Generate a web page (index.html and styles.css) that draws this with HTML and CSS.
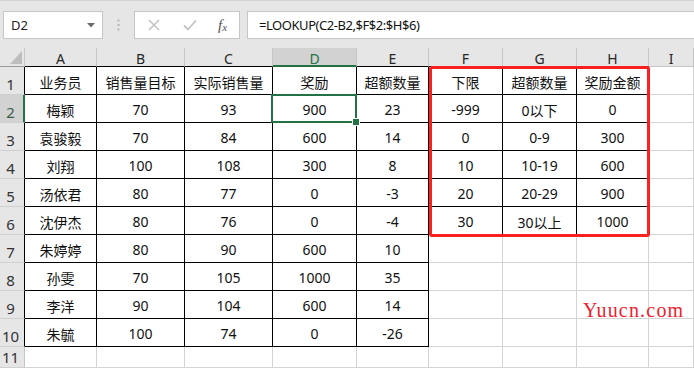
FILE: index.html
```html
<!DOCTYPE html>
<html>
<head>
<meta charset="utf-8">
<link rel="stylesheet" href="styles.css">
</head>
<body>
<div class="app">
  <div class="toolbar">
    <div class="namebox">
      <span>D2</span>
      <svg class="arrow" width="8" height="5" viewBox="0 0 8 5"><path d="M0 0H8L4 4.5Z" fill="#6b6b6b"/></svg>
    </div>
    <div class="dots">
      <svg width="3" height="12" viewBox="0 0 3 12"><rect x="0.5" y="0.5" width="2" height="2" fill="#b5b5b5"/><rect x="0.5" y="5" width="2" height="2" fill="#b5b5b5"/><rect x="0.5" y="9.5" width="2" height="2" fill="#b5b5b5"/></svg>
    </div>
    <div class="fxbtns">
      <svg class="btn" width="12" height="12" viewBox="0 0 12 12"><path d="M1 1L11 11M11 1L1 11" stroke="#c4c4c4" stroke-width="1.6"/></svg>
      <svg class="btn" width="14" height="12" viewBox="0 0 14 12"><path d="M1 6.5L5 10.5L13 1.5" stroke="#c4c4c4" stroke-width="1.8" fill="none"/></svg>
      <span class="fx">f<sub>x</sub></span>
    </div>
    <div class="formula">=LOOKUP(C2-B2,$F$2:$H$6)</div>
  </div>

  <div class="sheet">
    <div class="corner"><svg width="12" height="13" viewBox="0 0 12 13"><path d="M12 0V13H0Z" fill="#bdbdbd"/></svg></div>
    <div class="ch tb">A</div><div class="ch tb">B</div><div class="ch tb">C</div><div class="ch tb sel">D</div><div class="ch tb">E</div><div class="ch tb">F</div><div class="ch tb">G</div><div class="ch tb">H</div><div class="ch">I</div>

    <div class="rh">1</div><div class="c k">业务员</div><div class="c k">销售量目标</div><div class="c k">实际销售量</div><div class="c k">奖励</div><div class="c k">超额数量</div><div class="c k">下限</div><div class="c k">超额数量</div><div class="c k">奖励金额</div><div class="c"></div>
    <div class="rh rsel">2</div><div class="c k">梅颖</div><div class="c k">70</div><div class="c k">93</div><div class="c k active">900</div><div class="c k">23</div><div class="c k">-999</div><div class="c k">0以下</div><div class="c k">0</div><div class="c"></div>
    <div class="rh">3</div><div class="c k">袁骏毅</div><div class="c k">70</div><div class="c k">84</div><div class="c k">600</div><div class="c k">14</div><div class="c k">0</div><div class="c k">0-9</div><div class="c k">300</div><div class="c"></div>
    <div class="rh">4</div><div class="c k">刘翔</div><div class="c k">100</div><div class="c k">108</div><div class="c k">300</div><div class="c k">8</div><div class="c k">10</div><div class="c k">10-19</div><div class="c k">600</div><div class="c"></div>
    <div class="rh">5</div><div class="c k">汤依君</div><div class="c k">80</div><div class="c k">77</div><div class="c k">0</div><div class="c k">-3</div><div class="c k">20</div><div class="c k">20-29</div><div class="c k">900</div><div class="c"></div>
    <div class="rh">6</div><div class="c k">沈伊杰</div><div class="c k">80</div><div class="c k">76</div><div class="c k">0</div><div class="c k">-4</div><div class="c k">30</div><div class="c k">30以上</div><div class="c k">1000</div><div class="c"></div>
    <div class="rh">7</div><div class="c k">朱婷婷</div><div class="c k">80</div><div class="c k">90</div><div class="c k">600</div><div class="c k">10</div><div class="c"></div><div class="c"></div><div class="c"></div><div class="c"></div>
    <div class="rh">8</div><div class="c k">孙雯</div><div class="c k">70</div><div class="c k">105</div><div class="c k">1000</div><div class="c k">35</div><div class="c"></div><div class="c"></div><div class="c"></div><div class="c"></div>
    <div class="rh">9</div><div class="c k">李洋</div><div class="c k">90</div><div class="c k">104</div><div class="c k">600</div><div class="c k">14</div><div class="c"></div><div class="c"></div><div class="c"></div><div class="c"></div>
    <div class="rh">10</div><div class="c k">朱毓</div><div class="c k">100</div><div class="c k">74</div><div class="c k">0</div><div class="c k">-26</div><div class="c"></div><div class="c"></div><div class="c"></div><div class="c"></div>
    <div class="rh last">11</div><div class="c"></div><div class="c"></div><div class="c"></div><div class="c"></div><div class="c"></div><div class="c"></div><div class="c"></div><div class="c"></div><div class="c"></div>

    <div class="redbox"></div>
    <div class="wm">Yuucn.com</div>
  </div>
</div>
</body>
</html>
```

FILE: styles.css
```css
* { box-sizing: border-box; }
html, body { margin: 0; padding: 0; background: #fff; }
body { width: 694px; height: 368px; overflow: hidden; font-family: "Noto Sans", "Noto Sans CJK SC", sans-serif; }

.app { display: flex; flex-direction: column; }

.toolbar {
  height: 48px;
  background: #e6e6e6;
  border-top: 1px solid #d4d4d4;
  display: flex;
  align-items: flex-start;
  padding: 10px 0 0 3px;
}
.namebox {
  width: 100px; height: 28px;
  background: #fff;
  border: 1px solid #c6c6c6;
  display: flex; align-items: center; justify-content: space-between;
  padding: 0 7px 0 7px;
  font-size: 13px; color: #222;
}
.namebox .arrow { margin-top: 1px; }
.dots { width: 31px; height: 28px; display: flex; align-items: center; justify-content: center; padding-right: 1px; }
.fxbtns {
  width: 106px; height: 28px;
  background: #fff;
  border: 1px solid #c6c6c6;
  display: flex; align-items: center;
  padding-left: 13px; gap: 23px;
}
.fx { font-family: "Liberation Serif", serif; font-style: italic; font-size: 15px; color: #555; margin-left: -2px; }
.fx sub { font-size: 11px; vertical-align: -1px; }
.formula {
  margin-left: 7px;
  flex: 1;
  height: 28px;
  background: #fff;
  border: 1px solid #c6c6c6;
  border-right: none;
  display: flex; align-items: center;
  padding-left: 11px;
  font-size: 13px; letter-spacing: -0.45px; color: #111;
}

.sheet {
  position: relative;
  display: grid;
  grid-template-columns: 25px 72px 88px 88px 84px 72px 74px 74px 72px 45px;
  grid-template-rows: 19px repeat(10, 28px) 21px;
  font-size: 14px;
  color: #111;
}
.corner {
  background: #e6e6e6;
  border-right: 1px solid #c6c6c6;
  border-bottom: 1px solid #9a9a9a;
  display: flex; align-items: flex-end; justify-content: flex-end;
  padding: 0 2px 2px 0;
}
.ch {
  background: #e6e6e6;
  border-right: 1px solid #c6c6c6;
  border-bottom: 1px solid #c6c6c6;
  display: flex; align-items: center; justify-content: center;
  padding-top: 3px;
  font-size: 14px; color: #262626;
}
.ch.tb { border-bottom-color: #000; }
.ch.sel { background: #d2d2d2; color: #217346; border-bottom: 2px solid #217346; padding-top: 4px; }

.rh {
  background: #e6e6e6;
  border-right: 1px solid #000;
  border-bottom: 1px solid #d0d0d0;
  display: flex; align-items: flex-end; justify-content: center;
  padding: 0 3px 0 0;
  font-size: 15px; line-height: 20px; color: #333;
}
.rh.rsel { background: #d2d2d2; border-right: 2px solid #217346; color: #3d5a48; padding-right: 2px; }
.rh.last { border-right-color: #c6c6c6; }

.c {
  border-right: 1px solid #d4d4d4;
  border-bottom: 1px solid #d4d4d4;
  display: flex; align-items: center; justify-content: center;
  padding-top: 2px;
  white-space: nowrap;
}
.c.k { border-right-color: #000; border-bottom-color: #000; }

.active { position: relative; }
.active::before {
  content: "";
  position: absolute;
  left: -2px; top: -1px; right: -1px; bottom: -1px;
  border: 2px solid #217346;
}
.active::after {
  content: "";
  position: absolute;
  right: -4px; bottom: -4px;
  width: 6px; height: 6px;
  background: #217346;
  border: 1px solid #fff;
}

.redbox {
  position: absolute;
  left: 429px; top: 18px;
  width: 221px; height: 171px;
  border: 3px solid #fb2121;
  border-radius: 3px;
  pointer-events: none;
}
.wm {
  position: absolute;
  left: 583px; top: 251px;
  font-family: "Liberation Serif", serif;
  font-size: 20px;
  letter-spacing: 1.2px;
  color: #f21c2c;
}
```
